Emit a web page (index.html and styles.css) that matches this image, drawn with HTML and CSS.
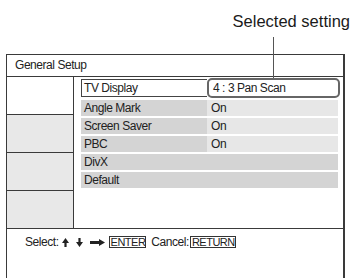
FILE: index.html
```html
<!DOCTYPE html>
<html>
<head>
<meta charset="utf-8">
<link rel="stylesheet" href="styles.css">
</head>
<body>
<div class="caption">Selected setting</div>
<div class="leader"></div>
<div class="panel">
  <div class="panel-head">General Setup</div>
  <div class="panel-body">
    <div class="side">
      <div class="cell cell-white"></div>
      <div class="cell"></div>
      <div class="cell"></div>
      <div class="cell"></div>
    </div>
    <div class="list">
      <div class="row row-selected">
        <div class="label">TV Display</div>
        <div class="value">4 : 3 Pan Scan</div>
      </div>
      <div class="row">
        <div class="label">Angle Mark</div>
        <div class="value">On</div>
      </div>
      <div class="row">
        <div class="label">Screen Saver</div>
        <div class="value">On</div>
      </div>
      <div class="row">
        <div class="label">PBC</div>
        <div class="value">On</div>
      </div>
      <div class="row row-full">
        <div class="label">DivX</div>
      </div>
      <div class="row row-full">
        <div class="label">Default</div>
      </div>
    </div>
  </div>
  <div class="panel-foot">
    <span class="ftext">Select:</span>
    <svg class="arr arr-up" width="7" height="9" viewBox="0 0 7 9"><path d="M3.5 0 L7 5 L4.6 5 L4.6 9 L2.4 9 L2.4 5 L0 5 Z" fill="#222"/></svg>
    <svg class="arr arr-down" width="7" height="9" viewBox="0 0 7 9"><path d="M3.5 9 L7 4 L4.6 4 L4.6 0 L2.4 0 L2.4 4 L0 4 Z" fill="#222"/></svg>
    <svg class="arr arr-right" width="15" height="7" viewBox="0 0 15 7"><path d="M0 2 L9 2 L9 0 L15 3.5 L9 7 L9 5 L0 5 Z" fill="#222"/></svg>
    <span class="key key-enter">ENTER</span>
    <span class="ftext ftext-cancel">Cancel:</span>
    <span class="key">RETURN</span>
  </div>
</div>
</body>
</html>
```

FILE: styles.css
```css
html, body {
  margin: 0;
  padding: 0;
  background: #ffffff;
}
body {
  width: 351px;
  height: 278px;
  overflow: hidden;
  position: relative;
  font-family: "Liberation Sans", Arial, sans-serif;
  color: #222222;
}
.caption {
  font-size: 16.5px;
  line-height: 18px;
  height: 18px;
  margin-top: 12px;
  padding-right: 1px;
  text-align: right;
  color: #1a1a1a;
}
.leader {
  position: absolute;
  left: 273px;
  top: 37px;
  width: 1px;
  height: 41px;
  background: #555555;
}
.panel {
  margin-top: 24px;
  margin-left: 6px;
  width: 336px;
  height: 223px;
  border-top: 1px solid #3a3a3a;
  border-left: 1px solid #3a3a3a;
  border-right: 2px solid #3a3a3a;
  display: flex;
  flex-direction: column;
  letter-spacing: -0.45px;
}
.panel-head {
  height: 21px;
  border-bottom: 1px solid #3a3a3a;
  font-size: 12px;
  line-height: 21px;
  padding-left: 8px;
  flex: none;
}
.panel-body {
  display: flex;
  height: 151px;
  border-bottom: 1px solid #3a3a3a;
  flex: none;
}
.side {
  width: 66px;
  border-right: 1px solid #3a3a3a;
  display: flex;
  flex-direction: column;
}
.cell {
  height: 37px;
  background: #e8e8e8;
  border-top: 1px solid #3a3a3a;
}
.cell-white {
  background: #ffffff;
  border-top: none;
}
.list {
  flex: 1;
  padding: 2px 5px 0 7px;
  display: flex;
  flex-direction: column;
  gap: 2px;
}
.row {
  display: flex;
  height: 16px;
  font-size: 12px;
  line-height: 16px;
}
.label {
  width: 123px;
  padding-left: 3px;
  background: #d4d4d4;
}
.value {
  flex: 1;
  padding-left: 4px;
  background: #e7e7e7;
}
.row-full .label {
  flex: 1;
}
.row-selected {
  height: 18px;
  margin-bottom: 1px;
}
.row-selected .label {
  background: #ffffff;
  border: 1px solid #444444;
  border-right: none;
  line-height: 16px;
  padding-left: 2px;
}
.row-selected .value {
  background: #ffffff;
  border: 2px solid #666666;
  border-radius: 5px;
  margin: -1px -2px -1px 0;
  line-height: 16px;
  padding-left: 4px;
}
.panel-foot {
  display: flex;
  align-items: center;
  height: 18px;
  padding-top: 4px;
  padding-left: 18px;
  font-size: 12px;
  line-height: 12px;
}
.ftext {
  display: block;
}
.arr {
  display: block;
  flex: none;
}
.arr-up {
  margin-left: 3px;
}
.arr-down {
  margin-left: 7px;
}
.arr-right {
  margin-left: 7px;
}
.key {
  display: block;
  border: 1px solid #333333;
  font-size: 11px;
  line-height: 9px;
  padding: 1px 0 0 1px;
  letter-spacing: -0.5px;
}
.key-enter {
  margin-left: 4px;
}
.ftext-cancel {
  margin-left: 5px;
  margin-right: 1px;
}
```
